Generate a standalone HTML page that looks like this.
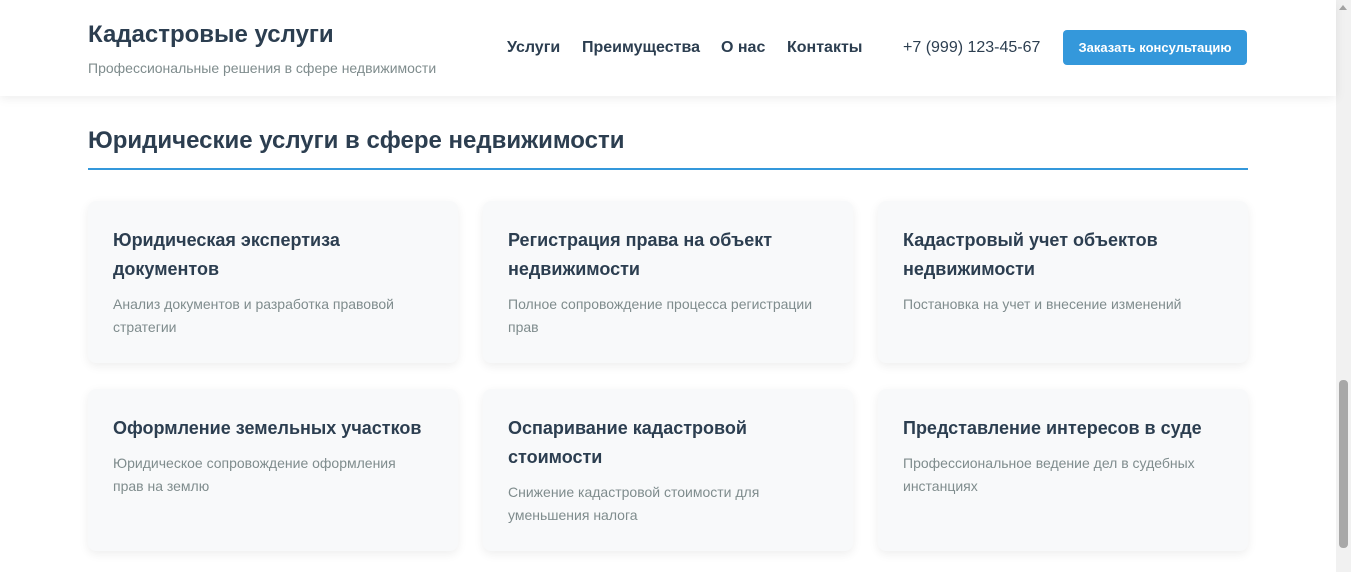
<!DOCTYPE html>
<html><head><meta charset="utf-8"><style>
*{margin:0;padding:0;box-sizing:border-box}
body{width:1351px;height:572px;overflow:hidden;background:#fff;font-family:"Liberation Sans",sans-serif;color:#2c3e50;position:relative}
header{position:absolute;left:0;top:0;width:1336px;height:96px;background:#fff;box-shadow:0 2px 10px rgba(0,0,0,.08);z-index:2}
.logo{position:absolute;left:88px;top:20px;font-size:24px;font-weight:bold;line-height:30px}
.sub{position:absolute;left:88px;top:59px;font-size:14px;color:#7f8c8d;line-height:18px}
nav{position:absolute;top:38px;font-size:16px;font-weight:bold;line-height:20px;color:#2c3e50}
.phone{position:absolute;left:903px;top:38px;font-size:16px;line-height:20px}
.btn{position:absolute;left:1063px;top:30px;width:184px;height:35px;background:#3498db;color:#fff;border-radius:4px;font-size:13px;font-weight:bold;text-align:center;line-height:35px}
h2{position:absolute;left:88px;top:126px;font-size:24px;line-height:30px}
.line{position:absolute;left:88px;top:168px;width:1160px;height:2px;background:#3498db}
.card{position:absolute;width:370px;height:162px;background:#f8f9fa;border-radius:8px;box-shadow:0 3px 10px rgba(0,0,0,.07);padding:25px}
.card h3{font-size:18px;line-height:29px;font-weight:bold}
.card p{font-size:14px;line-height:23px;color:#7f8c8d;margin-top:9px}
.sb{position:absolute;left:1336px;top:0;width:15px;height:572px;background:#f1f1f1}
.thumb{position:absolute;left:1339px;top:380px;width:9px;height:168px;background:#a8a8a8;border-radius:4px}
</style></head><body>
<header>
<div class="logo">Кадастровые услуги</div>
<div class="sub">Профессиональные решения в сфере недвижимости</div>
<nav style="left:507px">Услуги</nav>
<nav style="left:582px">Преимущества</nav>
<nav style="left:721px">О нас</nav>
<nav style="left:787px">Контакты</nav>
<div class="phone">+7 (999) 123-45-67</div>
<div class="btn">Заказать консультацию</div>
</header>
<h2>Юридические услуги в сфере недвижимости</h2>
<div class="line"></div>
<div class="card" style="left:88px;top:201px"><h3>Юридическая экспертиза документов</h3><p>Анализ документов и разработка правовой стратегии</p></div>
<div class="card" style="left:483px;top:201px"><h3>Регистрация права на объект недвижимости</h3><p>Полное сопровождение процесса регистрации прав</p></div>
<div class="card" style="left:878px;top:201px"><h3>Кадастровый учет объектов недвижимости</h3><p>Постановка на учет и внесение изменений</p></div>
<div class="card" style="left:88px;top:389px"><h3>Оформление земельных участков</h3><p>Юридическое сопровождение оформления<br>прав на землю</p></div>
<div class="card" style="left:483px;top:389px"><h3>Оспаривание кадастровой стоимости</h3><p>Снижение кадастровой стоимости для уменьшения налога</p></div>
<div class="card" style="left:878px;top:389px"><h3>Представление интересов в суде</h3><p>Профессиональное ведение дел в судебных инстанциях</p></div>
<div class="sb"></div><div class="thumb"></div>
<div style="position:absolute;left:1339px;top:5px;width:0;height:0;border-left:4px solid transparent;border-right:4px solid transparent;border-bottom:5px solid #a3a3a3"></div>
</body></html>
